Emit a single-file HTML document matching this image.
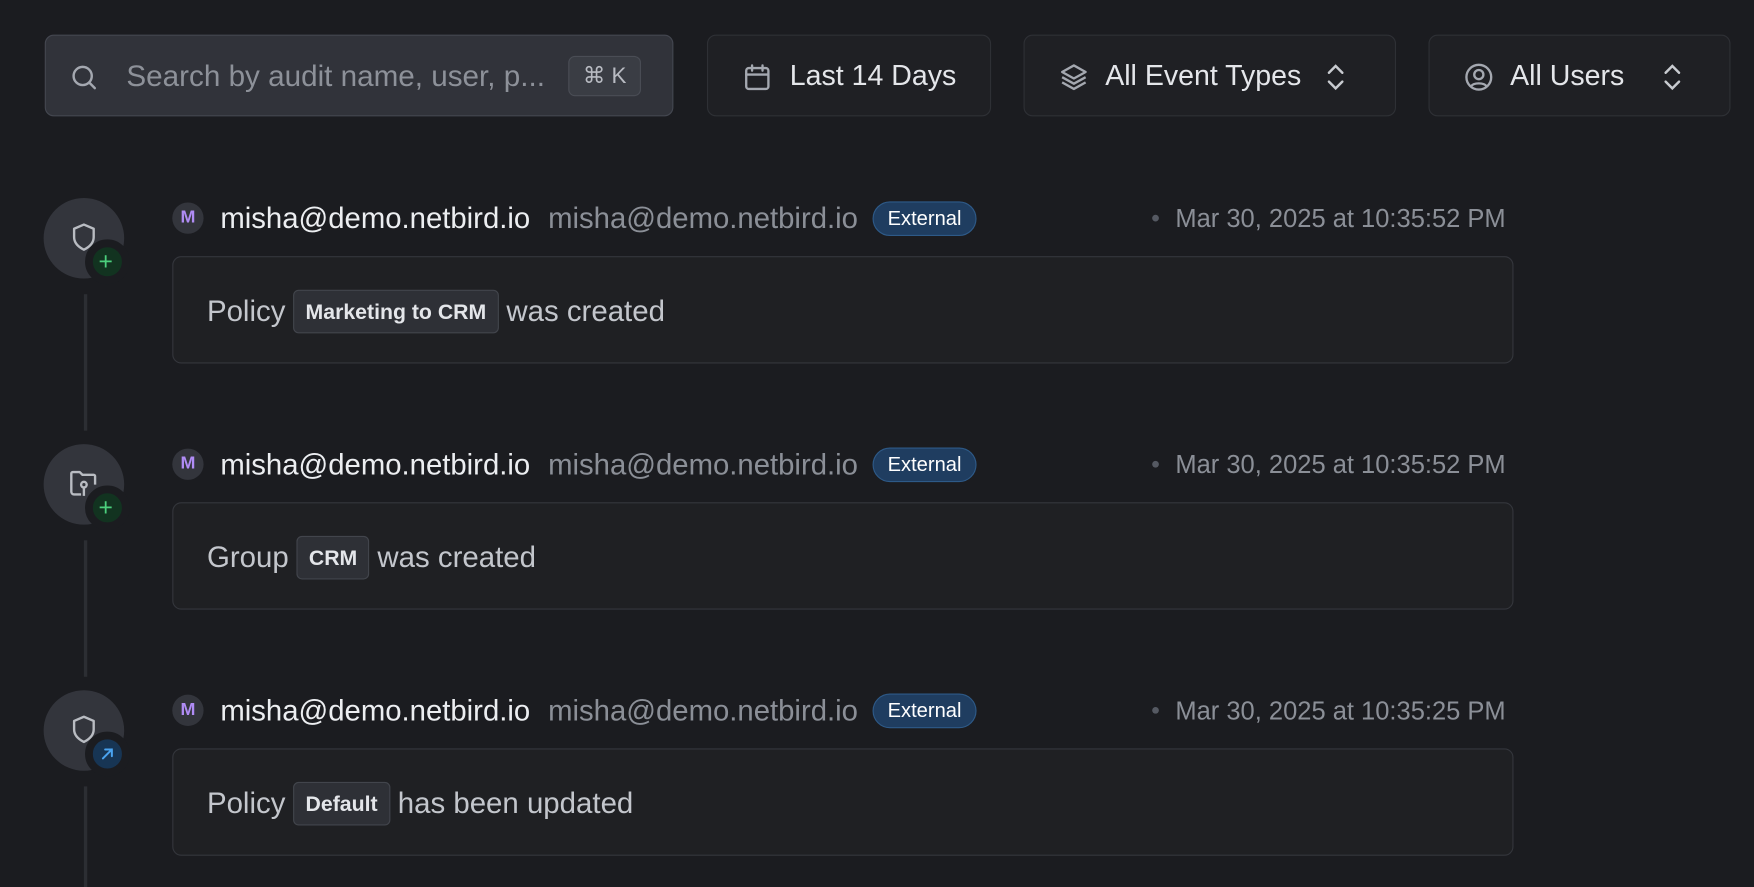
<!DOCTYPE html>
<html><head><meta charset="utf-8"><style>
html,body{margin:0;padding:0;background:#1b1c20;overflow:hidden}
body{width:1754px;height:886px;font-family:"Liberation Sans",sans-serif}
#w{position:absolute;left:0;top:0;width:1568px;height:792px;transform:scale(1.11862);transform-origin:0 0}
.a{position:absolute}
.btn{position:absolute;top:31px;height:73px;box-sizing:border-box;border:1px solid #2e3035;background:#1f2024;border-radius:8px;color:#e4e6ea;font-size:25.5px;display:flex;align-items:center;padding-top:2px}
.circ{position:absolute;width:72px;height:72px;border-radius:50%;background:#33353c;left:39px}
.badge{position:absolute;width:26px;height:26px;border-radius:50%;border:7px solid #1b1c20;left:76px}
.m{position:absolute;left:154px;width:28px;height:28px;border-radius:50%;background:#33353c;color:#b08cf5;font-size:16px;text-align:center;line-height:28px;font-weight:bold}
.name{position:absolute;left:197px;font-size:26.2px;color:#eceef1}
.email{position:absolute;left:490px;font-size:26.2px;color:#8b8f97}
.ext{position:absolute;left:780px;width:93px;height:31px;box-sizing:border-box;border-radius:16px;background:#1f3d60;border:1px solid #2e5a88;color:#fff;font-size:18px;text-align:center;line-height:29px}
.dot{position:absolute;left:1030px;width:6px;height:6px;border-radius:50%;background:#555962}
.date{position:absolute;right:222px;font-size:22.8px;color:#8b8f97}
.card{position:absolute;left:154px;width:1199px;height:96px;box-sizing:border-box;border:1.5px solid #34363c;border-radius:8px;background:#1f2023;color:#c3c6cc;font-size:26.3px;display:flex;align-items:center;padding-left:30px;padding-top:2px}
.chip{display:inline-block;border:1px solid #42454c;background:#2e3036;border-radius:5px;color:#e4e6ea;font-size:19px;font-weight:bold;padding:0 10px;height:37px;line-height:40px;margin:0 7px}
.line{position:absolute;left:75px;width:3px;background:#2c2e33}
</style></head><body><div id="w">
<div class="a" style="left:40px;top:31px;width:562px;height:73px;box-sizing:border-box;border:1.5px solid #444750;background:#31333a;border-radius:8px"></div>
<svg class="a" style="left:62px;top:56px" width="26" height="26" viewBox="0 0 24 24" fill="none" stroke="#a4a8b0" stroke-width="2" stroke-linecap="round"><circle cx="11" cy="11" r="7.5"/><path d="M17 17l4 4"/></svg>
<div class="a" style="left:113px;top:53px;font-size:26.5px;color:#8d9199">Search by audit name, user, p...</div>
<div class="a" style="left:508px;top:50px;width:65px;height:36px;box-sizing:border-box;border:1px solid #4a4d55;background:#3a3d44;border-radius:6px;color:#b8bbc2;font-size:20px;text-align:center;line-height:34px">⌘ K</div>

<div class="btn" style="left:632px;width:254px"><svg style="margin-left:30px" width="28" height="28" viewBox="0 0 24 24" fill="none" stroke="#a4a8b0" stroke-width="1.8" stroke-linecap="round"><rect x="3.5" y="5" width="17" height="16" rx="2"/><path d="M3.5 10h17M8 3v4M16 3v4"/></svg><span style="margin-left:15px">Last 14 Days</span></div>
<div class="btn" style="left:915px;width:333px"><svg style="margin-left:30px" width="28" height="28" viewBox="0 0 24 24" fill="none" stroke="#a4a8b0" stroke-width="1.8" stroke-linejoin="round"><path d="M12 3l9 5-9 5-9-5z"/><path d="M3 12l9 5 9-5M3 16l9 5 9-5"/></svg><span style="margin-left:14px">All Event Types</span><svg style="margin-left:20px" width="22" height="28" viewBox="0 0 22 28" fill="none" stroke="#c8cbd0" stroke-width="2.2" stroke-linecap="round"><path d="M5 10l6-6 6 6M5 18l6 6 6-6"/></svg></div>
<div class="btn" style="left:1277px;width:270px"><svg style="margin-left:30px" width="28" height="28" viewBox="0 0 24 24" fill="none" stroke="#a4a8b0" stroke-width="1.8"><circle cx="12" cy="12" r="9.5"/><circle cx="12" cy="10" r="3.5"/><path d="M6 19c2-3 10-3 12 0"/></svg><span style="margin-left:14px">All Users</span><svg style="margin-left:32px" width="22" height="28" viewBox="0 0 22 28" fill="none" stroke="#c8cbd0" stroke-width="2.2" stroke-linecap="round"><path d="M5 10l6-6 6 6M5 18l6 6 6-6"/></svg></div>

<div class="line" style="top:263px;height:122px"></div>
<div class="line" style="top:483px;height:122px"></div>
<div class="line" style="top:703px;height:90px"></div>

<div class="circ" style="top:177px"></div>
<svg class="a" style="left:60px;top:196px" width="30" height="32" viewBox="0 0 24 24" fill="none" stroke="#b9bcc2" stroke-width="1.7" stroke-linejoin="round"><path d="M12 3l7 3v6c0 4-3 7-7 9-4-2-7-5-7-9V6z"/></svg>
<div class="badge" style="top:214px;background:#123320"></div>
<div class="a" style="left:88px;top:223px;color:#4ccf7d;font-size:22px;line-height:22px">+</div>

<div class="circ" style="top:397px"></div>
<svg class="a" style="left:60px;top:417px" width="30" height="30" viewBox="0 0 24 24" fill="none" stroke="#b9bcc2" stroke-width="1.7" stroke-linejoin="round"><path d="M10 20H5a2 2 0 0 1-2-2V5a1 1 0 0 1 1-1h5l2 2h8a1 1 0 0 1 1 1v6"/><circle cx="12" cy="13" r="2"/><path d="M12 15v6"/></svg>
<div class="badge" style="top:434px;background:#123320"></div>
<div class="a" style="left:88px;top:443px;color:#4ccf7d;font-size:22px;line-height:22px">+</div>

<div class="circ" style="top:617px"></div>
<svg class="a" style="left:60px;top:636px" width="30" height="32" viewBox="0 0 24 24" fill="none" stroke="#b9bcc2" stroke-width="1.7" stroke-linejoin="round"><path d="M12 3l7 3v6c0 4-3 7-7 9-4-2-7-5-7-9V6z"/></svg>
<div class="badge" style="top:654px;background:#173554"></div>
<svg class="a" style="left:88px;top:666px" width="16" height="16" viewBox="0 0 16 16" fill="none" stroke="#4aa3f0" stroke-width="1.8" stroke-linecap="round"><path d="M4 12l8-8M6 4h6v6"/></svg>

<div class="m" style="top:181px">M</div><div class="name" style="top:180px">misha@demo.netbird.io</div><div class="email" style="top:180px">misha@demo.netbird.io</div><div class="ext" style="top:180px">External</div><div class="dot" style="top:192px"></div><div class="date" style="top:182px">Mar 30, 2025 at 10:35:52 PM</div>
<div class="card" style="top:229px">Policy<span class="chip">Marketing to CRM</span>was created</div>

<div class="m" style="top:401px">M</div><div class="name" style="top:400px">misha@demo.netbird.io</div><div class="email" style="top:400px">misha@demo.netbird.io</div><div class="ext" style="top:400px">External</div><div class="dot" style="top:412px"></div><div class="date" style="top:402px">Mar 30, 2025 at 10:35:52 PM</div>
<div class="card" style="top:449px">Group<span class="chip">CRM</span>was created</div>

<div class="m" style="top:621px">M</div><div class="name" style="top:620px">misha@demo.netbird.io</div><div class="email" style="top:620px">misha@demo.netbird.io</div><div class="ext" style="top:620px">External</div><div class="dot" style="top:632px"></div><div class="date" style="top:622px">Mar 30, 2025 at 10:35:25 PM</div>
<div class="card" style="top:669px">Policy<span class="chip">Default</span>has been updated</div>
</div></body></html>
